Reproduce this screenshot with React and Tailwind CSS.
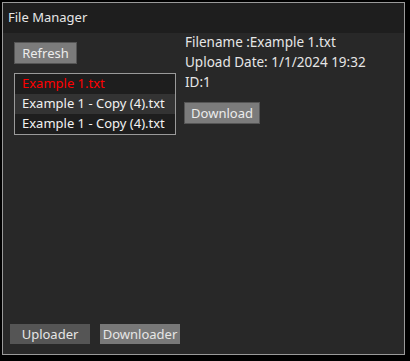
const FILES = [
  { name: "Example 1.txt", selected: true },
  { name: "Example 1 - Copy (4).txt" },
  { name: "Example 1 - Copy (4).txt" },
];

export default function App() {
  return (
    <div
      className="w-[410px] h-[361px] bg-black pt-[2px] pl-[2px] text-[13px]"
      style={{ fontFamily: '"Noto Sans", "Liberation Sans", sans-serif' }}
    >
      <div className="w-[403px] h-[353px] border border-[#9a9a9a] flex flex-col">
        {/* Title bar */}
        <div className="h-[30px] bg-[#1e1e1e] text-[#e6e6e6] pl-[5px] flex items-center">
          File Manager
        </div>

        {/* Body */}
        <div className="flex-1 bg-[#282828] flex flex-col">
          <div className="flex">
            <div className="pl-[11px] pt-[9px] w-[182px]">
              <button className="h-[22px] w-[63px] bg-[#7b7b7b] border border-[#555] text-[#ececec] leading-none">
                Refresh
              </button>
              <div className="mt-[9px] w-[162px] border border-[#9a9a9a]">
                {FILES.map((f, i) => (
                  <div
                    key={i}
                    className={`h-[20px] pl-[7px] flex items-center ${
                      i === 1 ? "bg-[#333333]" : "bg-[#1e1e1e]"
                    } ${f.selected ? "text-[#ff0000]" : "text-[#f2f2f2]"}`}
                  >
                    {f.name}
                  </div>
                ))}
              </div>
            </div>

            <div className="-mt-[1px] text-[#e6e6e6] text-[13.5px] leading-[20px]">
              <div>Filename :Example 1.txt</div>
              <div>Upload Date: 1/1/2024 19:32</div>
              <div>ID:1</div>
              <button className="mt-[10px] -ml-[1px] h-[22px] w-[76px] bg-[#7b7b7b] border border-[#555] text-[#ececec] text-[13px] leading-none">
                Download
              </button>
            </div>
          </div>

          <div className="mt-auto mb-[10px] ml-[7px] flex gap-[10px]">
            <button className="h-[20px] w-[80px] bg-[#555555] text-[#e6e6e6] leading-none">
              Uploader
            </button>
            <button className="h-[20px] w-[80px] bg-[#787878] text-[#e6e6e6] leading-none">
              Downloader
            </button>
          </div>
        </div>
      </div>
    </div>
  );
}
